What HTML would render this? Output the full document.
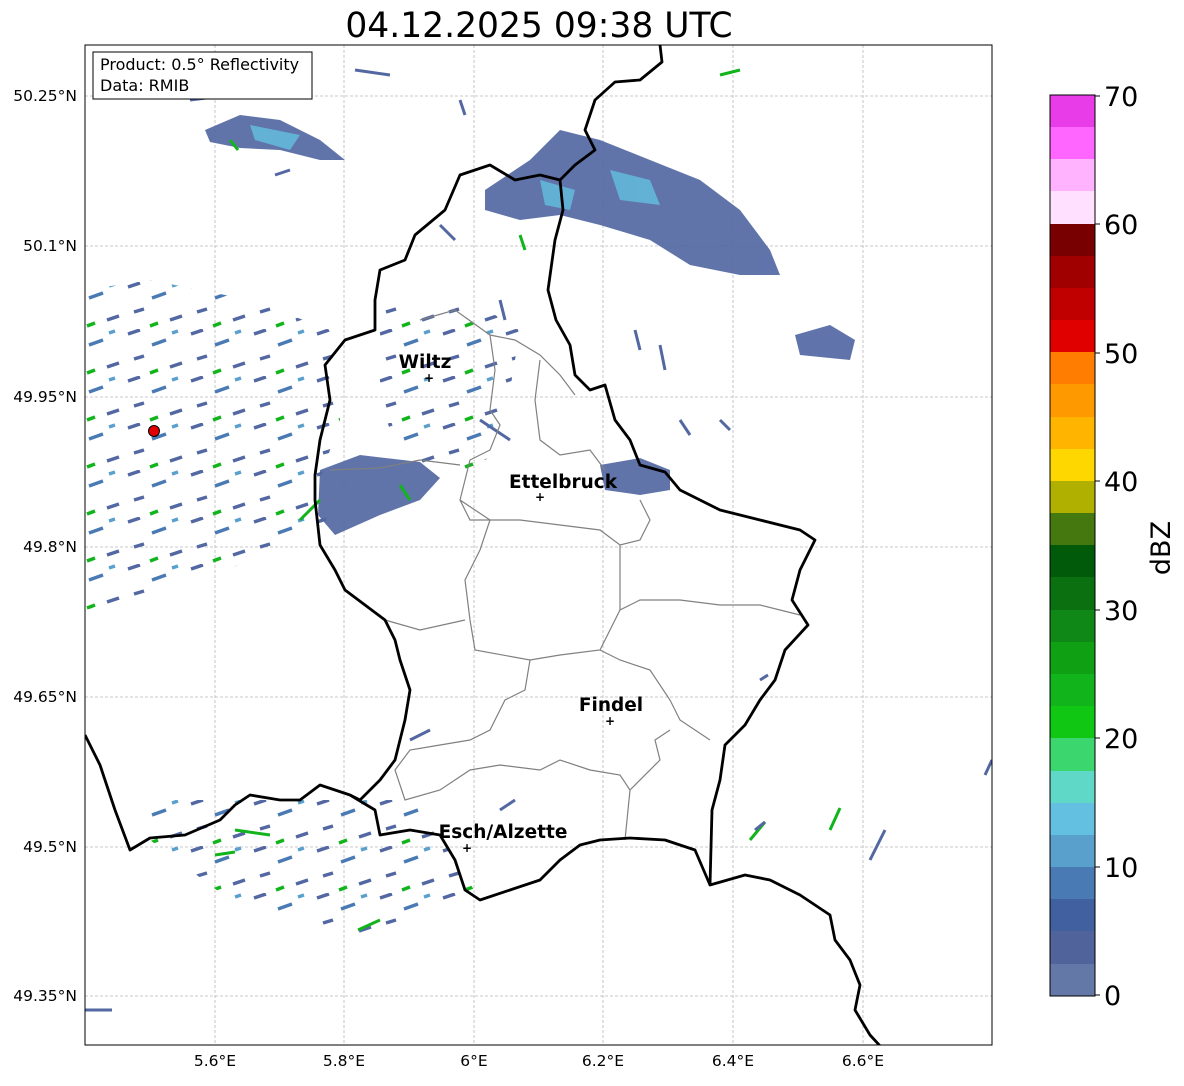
<!DOCTYPE html>
<html><head><meta charset="utf-8"><style>
html,body{margin:0;padding:0;background:#fff;}
svg text{font-family:"DejaVu Sans","Liberation Sans",sans-serif;}
</style></head><body>
<svg width="1184" height="1081" viewBox="0 0 1184 1081" xmlns="http://www.w3.org/2000/svg">
<rect width="1184" height="1081" fill="#fff"/>
<text x="539" y="37" font-size="34.5" text-anchor="middle" fill="#000">04.12.2025 09:38 UTC</text>
<defs>
<clipPath id="c"><rect x="85" y="45" width="907" height="1000"/></clipPath>
<pattern id="sp" width="63" height="47" patternUnits="userSpaceOnUse">
<g stroke-width="3.5">
<line x1="2" y1="5" x2="14" y2="1" stroke="#5368a3"/><line x1="26" y1="16" x2="40" y2="11" stroke="#4a7ab4"/>
<line x1="8" y1="30" x2="18" y2="27" stroke="#5368a3"/><line x1="44" y1="38" x2="56" y2="34" stroke="#5368a3"/>
<line x1="46" y1="4" x2="52" y2="2" stroke="#5aa0cc"/><line x1="24" y1="44" x2="32" y2="41" stroke="#12b41c"/>
</g></pattern>
</defs>
<g clip-path="url(#c)">
<g stroke="#b8b8b8" stroke-width="0.8" stroke-dasharray="3,2">
<line x1="215" y1="45" x2="215" y2="1045"/><line x1="344" y1="45" x2="344" y2="1045"/><line x1="474" y1="45" x2="474" y2="1045"/><line x1="603" y1="45" x2="603" y2="1045"/><line x1="733" y1="45" x2="733" y2="1045"/><line x1="863" y1="45" x2="863" y2="1045"/>
<line x1="85" y1="96" x2="992" y2="96"/><line x1="85" y1="246" x2="992" y2="246"/><line x1="85" y1="397" x2="992" y2="397"/><line x1="85" y1="547" x2="992" y2="547"/><line x1="85" y1="697" x2="992" y2="697"/><line x1="85" y1="847" x2="992" y2="847"/><line x1="85" y1="996" x2="992" y2="996"/>
</g>
<g fill="url(#sp)">
<polygon points="85,290 150,280 250,300 330,330 340,420 320,480 330,540 250,560 180,590 85,610"/>
<polygon points="380,300 470,300 520,330 500,450 470,470 400,460 380,400"/>
<polygon points="150,800 420,800 480,900 360,935 230,900 150,840"/>
</g>
<g fill="#5368a3" opacity="0.92">
<polygon points="485,190 530,160 560,130 600,140 650,160 700,180 740,210 770,250 780,275 740,275 690,265 650,240 600,225 560,215 520,220 485,210"/>
<polygon points="205,130 240,115 280,120 320,140 345,160 320,160 280,150 240,148 210,142"/>
<polygon points="600,465 640,458 670,470 670,490 640,495 605,490"/>
<polygon points="320,470 360,455 420,462 440,478 420,500 380,515 335,535 318,515"/>
<polygon points="795,335 830,325 855,340 850,360 800,355"/>
</g>
<g fill="#64c0e0" opacity="0.8">
<polygon points="540,180 575,190 570,210 545,205"/><polygon points="610,170 650,180 660,205 620,200"/>
<polygon points="250,125 300,135 290,150 255,140"/>
</g>
<g stroke="#12b41c" stroke-width="3">
<line x1="520" y1="235" x2="525" y2="250"/><line x1="230" y1="140" x2="238" y2="150"/><line x1="400" y1="485" x2="410" y2="500"/><line x1="750" y1="840" x2="765" y2="822"/><line x1="830" y1="830" x2="840" y2="808"/><line x1="358" y1="930" x2="380" y2="920"/><line x1="215" y1="855" x2="235" y2="852"/><line x1="235" y1="830" x2="270" y2="835"/><line x1="720" y1="75" x2="740" y2="70"/><line x1="300" y1="520" x2="320" y2="500"/>
</g>
<g stroke="#5368a3" stroke-width="3">
<line x1="355" y1="70" x2="390" y2="75"/><line x1="460" y1="100" x2="465" y2="115"/><line x1="440" y1="225" x2="455" y2="240"/><line x1="635" y1="330" x2="640" y2="350"/><line x1="680" y1="420" x2="690" y2="435"/><line x1="275" y1="175" x2="290" y2="170"/><line x1="410" y1="740" x2="430" y2="730"/><line x1="500" y1="810" x2="515" y2="800"/><line x1="85" y1="1010" x2="112" y2="1010"/><line x1="870" y1="860" x2="885" y2="830"/><line x1="985" y1="775" x2="992" y2="760"/><line x1="760" y1="680" x2="768" y2="675"/><line x1="480" y1="420" x2="510" y2="440"/><line x1="500" y1="300" x2="505" y2="320"/><line x1="720" y1="420" x2="730" y2="430"/><line x1="660" y1="345" x2="665" y2="370"/><line x1="755" y1="830" x2="765" y2="822"/><line x1="190" y1="100" x2="230" y2="95"/></g>
<g fill="none" stroke="#808080" stroke-width="1.2">
<path d="M420,320 L455,310 L490,335 L515,340 L540,355 L560,375 L575,395"/>
<path d="M490,335 L495,370 L490,410 L500,425 L490,450 L470,460 L460,500 L470,520 L490,520 L520,520 L560,525 L600,530 L620,545 L640,540 L650,520 L640,500"/>
<path d="M330,470 L380,468 L420,460 L460,465"/>
<path d="M540,360 L535,400 L540,440 L560,455 L590,450 L605,470"/>
<path d="M460,500 L490,520 L480,550 L465,580 L470,620 L475,650 L530,660 L560,655 L600,650 L620,610 L640,600 L680,600 L720,605 L760,605 L800,615"/>
<path d="M620,545 L620,610"/>
<path d="M385,620 L420,630 L465,620"/>
<path d="M530,660 L525,690 L505,700 L490,730 L470,740 L440,745 L410,750 L395,770 L405,800 L440,790 L470,770 L500,765 L540,770 L560,760 L590,770 L620,775 L630,790 L625,840"/>
<path d="M600,650 L620,660 L650,670 L670,700 L680,720 L710,740"/>
<path d="M630,790 L660,760 L655,740 L670,730"/>
</g>
<g fill="none" stroke="#000" stroke-width="2.8" stroke-linejoin="round">
<path d="M660,45 L662,62 L640,80 L615,82 L595,100 L585,130 L595,150 L575,165 L560,180 L563,210 L555,240 L548,290 L556,320 L570,345 L575,375 L590,390 L605,385 L615,420 L630,440 L640,465 L665,472 L680,490 L700,500 L720,510 L760,520 L800,530 L815,540 L800,570 L792,600 L808,625 L785,650 L775,680 L760,700 L745,725 L725,745 L720,780 L712,810 L710,885 L745,875 L770,880 L800,895 L830,915 L835,940 L850,960 L860,985 L855,1010 L870,1035 L882,1048"/>
<path d="M560,180 L540,175 L515,180 L490,165 L460,175 L445,210 L415,235 L405,260 L380,270 L375,300 L375,330 L345,340 L325,365 L330,400 L320,440 L315,475 L315,500 L320,545 L335,570 L345,590 L385,620 L395,640 L400,660 L410,690 L405,720 L395,760 L380,780 L360,800 L350,795 L320,785 L300,800 L280,800 L250,795 L235,805 L220,820 L185,835 L150,838 L130,850 L115,810 L100,765 L85,735"/>
<path d="M350,795 L375,810 L380,835 L410,830 L440,835 L455,860 L465,890 L480,900 L510,890 L540,880 L560,860 L580,845 L600,840 L630,838 L665,840 L695,850 L710,885"/>
</g>
<circle cx="154" cy="431" r="5.5" fill="#e00000" stroke="#000" stroke-width="1"/>
</g>
<rect x="85" y="45" width="907" height="1000" fill="none" stroke="#000" stroke-width="1"/>
<g font-size="18.5" font-weight="bold" text-anchor="middle" fill="#000">
<text x="425" y="368">Wiltz</text><text x="563" y="488">Ettelbruck</text><text x="611" y="711">Findel</text><text x="503" y="838">Esch/Alzette</text>
</g>
<g font-size="12" font-weight="bold" text-anchor="middle" fill="#000">
<text x="429" y="382">+</text><text x="540" y="501">+</text><text x="610" y="725">+</text><text x="467" y="852">+</text>
</g>
<rect x="93" y="52" width="219" height="47" fill="#fff" stroke="#000" stroke-width="1"/>
<text x="100" y="70" font-size="16">Product: 0.5° Reflectivity</text>
<text x="100" y="91" font-size="16">Data: RMIB</text>
<g font-size="15.5" fill="#000" text-anchor="end">
<text x="77" y="101">50.25°N</text><text x="77" y="251">50.1°N</text><text x="77" y="402">49.95°N</text><text x="77" y="552">49.8°N</text><text x="77" y="702">49.65°N</text><text x="77" y="852">49.5°N</text><text x="77" y="1001">49.35°N</text>
</g>
<g font-size="15.5" fill="#000" text-anchor="middle">
<text x="215" y="1066">5.6°E</text><text x="344" y="1066">5.8°E</text><text x="474" y="1066">6°E</text><text x="603" y="1066">6.2°E</text><text x="733" y="1066">6.4°E</text><text x="863" y="1066">6.6°E</text>
</g>
<g>
<rect x="1050" y="95" width="45" height="33" fill="#e83ce8"/><rect x="1050" y="127" width="45" height="33" fill="#ff66ff"/><rect x="1050" y="159" width="45" height="33" fill="#ffb3ff"/><rect x="1050" y="191" width="45" height="33" fill="#ffe0ff"/>
<rect x="1050" y="224" width="45" height="33" fill="#780000"/><rect x="1050" y="256" width="45" height="33" fill="#a00000"/><rect x="1050" y="288" width="45" height="33" fill="#c00000"/><rect x="1050" y="320" width="45" height="33" fill="#e00000"/>
<rect x="1050" y="352" width="45" height="33" fill="#ff7d00"/><rect x="1050" y="384" width="45" height="33" fill="#ff9900"/><rect x="1050" y="417" width="45" height="33" fill="#ffb400"/><rect x="1050" y="449" width="45" height="33" fill="#ffd700"/>
<rect x="1050" y="481" width="45" height="33" fill="#b0b000"/><rect x="1050" y="513" width="45" height="33" fill="#467810"/><rect x="1050" y="545" width="45" height="33" fill="#005a0a"/><rect x="1050" y="577" width="45" height="33" fill="#0a7010"/>
<rect x="1050" y="610" width="45" height="33" fill="#0f8818"/><rect x="1050" y="642" width="45" height="33" fill="#10a014"/><rect x="1050" y="674" width="45" height="33" fill="#12b41c"/><rect x="1050" y="706" width="45" height="33" fill="#10c814"/>
<rect x="1050" y="738" width="45" height="33" fill="#3cd66e"/><rect x="1050" y="771" width="45" height="33" fill="#60d8c8"/><rect x="1050" y="803" width="45" height="33" fill="#64c0e0"/><rect x="1050" y="835" width="45" height="33" fill="#5aa0cc"/>
<rect x="1050" y="867" width="45" height="33" fill="#4a7ab4"/><rect x="1050" y="899" width="45" height="33" fill="#4160a0"/><rect x="1050" y="931" width="45" height="33" fill="#50649b"/><rect x="1050" y="964" width="45" height="32" fill="#6478a8"/>
<rect x="1050" y="95" width="45" height="901" fill="none" stroke="#000" stroke-width="1"/>
<g stroke="#000" stroke-width="1"><line x1="1095" y1="96" x2="1100" y2="96"/><line x1="1095" y1="224" x2="1100" y2="224"/><line x1="1095" y1="353" x2="1100" y2="353"/><line x1="1095" y1="481" x2="1100" y2="481"/><line x1="1095" y1="610" x2="1100" y2="610"/><line x1="1095" y1="738" x2="1100" y2="738"/><line x1="1095" y1="867" x2="1100" y2="867"/><line x1="1095" y1="995" x2="1100" y2="995"/></g>
<g font-size="27" fill="#000">
<text x="1104" y="106">70</text><text x="1104" y="234">60</text><text x="1104" y="363">50</text><text x="1104" y="491">40</text><text x="1104" y="620">30</text><text x="1104" y="748">20</text><text x="1104" y="877">10</text><text x="1104" y="1005">0</text>
</g>
<text x="1170" y="548" font-size="27" text-anchor="middle" transform="rotate(-90 1170 548)">dBZ</text>
</g>
</svg>
</body></html>
